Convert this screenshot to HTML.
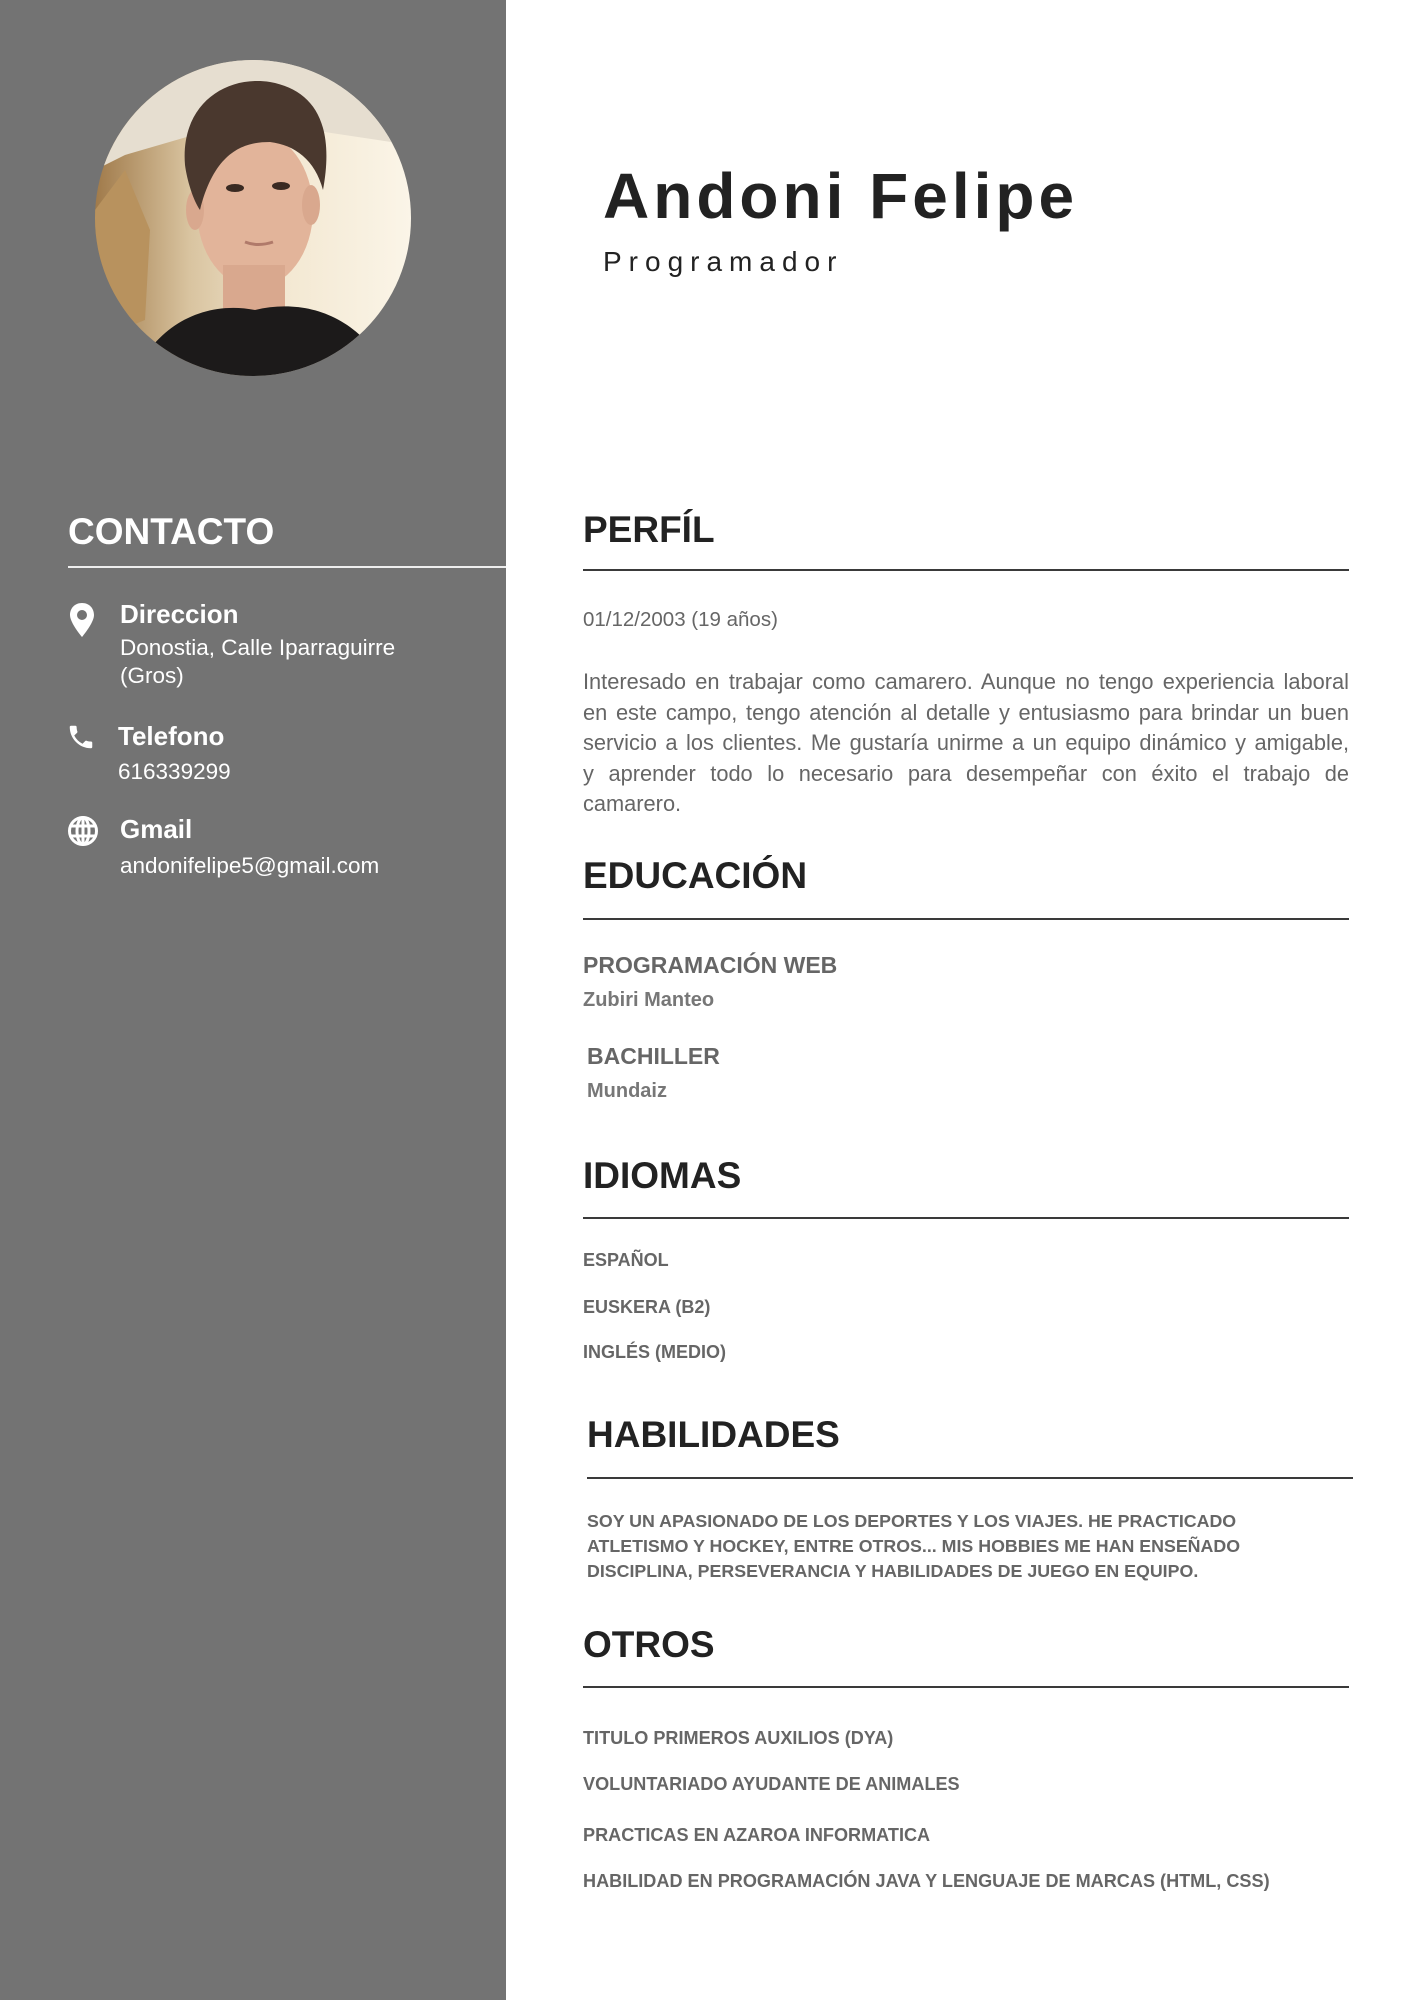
<!DOCTYPE html>
<html><head><meta charset="utf-8"><style>
*{margin:0;padding:0;box-sizing:border-box}
body{width:1414px;height:2000px;position:relative;background:#fff;font-family:"Liberation Sans",sans-serif;overflow:hidden}
.side{position:absolute;left:0;top:0;width:506px;height:2000px;background:#737373}
.a{position:absolute;white-space:nowrap}
.h{font-size:37px;font-weight:bold;color:#222;height:44px;line-height:44px}
.rule{position:absolute;height:2px;background:#3a3a3a}
.w{color:#fff}
.g{color:#666;font-weight:bold}
.p div{text-align:justify}
</style></head><body>
<div class="side"></div>
<svg class="a" style="left:95px;top:60px" width="316" height="316" viewBox="0 0 316 316">
<defs><clipPath id="c"><circle cx="158" cy="158" r="158"/></clipPath>
<linearGradient id="bg" x1="0" x2="1"><stop offset="0" stop-color="#a07a4a"/><stop offset=".3" stop-color="#d9c4a0"/><stop offset=".6" stop-color="#f3e8d2"/><stop offset="1" stop-color="#fbf5e8"/></linearGradient></defs>
<g clip-path="url(#c)">
<rect width="316" height="316" fill="url(#bg)"/>
<path d="M0 0 H316 V85 L150 60 L30 95 L0 110Z" fill="#e6ded0"/>
<path d="M0 150 L30 110 L55 170 L50 260 L0 280Z" fill="#b8925e"/>
<ellipse cx="160" cy="150" rx="58" ry="78" fill="#e2b49a"/>
<ellipse cx="100" cy="150" rx="9" ry="20" fill="#d9a88e"/><ellipse cx="216" cy="145" rx="9" ry="20" fill="#d9a88e"/>
<path d="M90 105 C85 45 130 15 175 22 C220 30 240 65 228 130 C220 100 200 85 175 82 C150 82 120 90 105 150 C98 140 92 120 90 105Z" fill="#4a382e"/>
<ellipse cx="140" cy="128" rx="9" ry="4" fill="#3a2a22"/><ellipse cx="186" cy="126" rx="9" ry="4" fill="#3a2a22"/>
<path d="M150 182 Q163 187 178 182" stroke="#b07a6a" stroke-width="3" fill="none"/>
<rect x="128" y="205" width="62" height="50" fill="#d9a88e"/>
<path d="M40 316 C60 265 110 240 160 250 C210 238 265 255 295 316Z" fill="#1c1a1a"/>
</g></svg>

<div class="a" style="left:603px;top:160px;font-size:64px;font-weight:bold;color:#222;letter-spacing:4px;line-height:72px">Andoni Felipe</div>
<div class="a" style="left:603px;top:246px;font-size:28px;color:#222;letter-spacing:7px;line-height:32px">Programador</div>

<div class="a h w" style="left:68px;top:510px">CONTACTO</div>
<div class="rule" style="left:68px;top:566px;width:438px;background:#eee"></div>

<svg class="a" style="left:68px;top:602px" width="28" height="36" viewBox="0 0 28 36"><path d="M14 1C6.5 1 2 6.5 2 13c0 8 12 22 12 22s12-14 12-22C26 6.5 21.5 1 14 1zm0 17a5 5 0 1 1 0-10 5 5 0 0 1 0 10z" fill="#fff" fill-rule="evenodd"/></svg>
<div class="a w" style="left:120px;top:598px;font-size:26px;font-weight:bold;line-height:32px">Direccion</div>
<div class="a w" style="left:120px;top:634px;font-size:22.5px;line-height:28px">Donostia, Calle Iparraguirre<br>(Gros)</div>

<svg class="a" style="left:66px;top:722px" width="30" height="30" viewBox="0 0 24 24"><path d="M6.6 10.8a15.1 15.1 0 0 0 6.6 6.6l2.2-2.2c.3-.3.7-.4 1-.2 1.1.4 2.3.6 3.6.6.6 0 1 .4 1 1V20c0 .6-.4 1-1 1C10.6 21 3 13.4 3 4c0-.6.4-1 1-1h3.5c.6 0 1 .4 1 1 0 1.3.2 2.5.6 3.6.1.3 0 .7-.2 1z" fill="#fff"/></svg>
<div class="a w" style="left:118px;top:720px;font-size:26px;font-weight:bold;line-height:32px">Telefono</div>
<div class="a w" style="left:118px;top:758px;font-size:22.5px;line-height:28px">616339299</div>

<svg class="a" style="left:67px;top:815px" width="32" height="32" viewBox="0 0 32 32"><g fill="none" stroke="#fff" stroke-width="3"><circle cx="16" cy="16" r="13.5"/><ellipse cx="16" cy="16" rx="6" ry="13.5"/><path d="M3 11h26M3 21h26M16 2.5v27"/></g></svg>
<div class="a w" style="left:120px;top:813px;font-size:26px;font-weight:bold;line-height:32px">Gmail</div>
<div class="a w" style="left:120px;top:852px;font-size:22.5px;line-height:28px">andonifelipe5@gmail.com</div>

<div class="a h" style="left:583px;top:508px">PERFÍL</div>
<div class="rule" style="left:583px;top:569px;width:766px"></div>
<div class="a" style="left:583px;top:606px;font-size:20.5px;color:#666;line-height:28px">01/12/2003 (19 años)</div>
<div class="a p" style="left:583px;top:667px;width:766px;white-space:normal;font-size:21.8px;color:#666;line-height:30.5px">
<div style="text-align-last:justify">Interesado en trabajar como camarero. Aunque no tengo experiencia laboral en este campo, tengo atención al detalle y entusiasmo para brindar un buen servicio a los clientes. Me gustaría unirme a un equipo dinámico y amigable,</div>
<div>y aprender todo lo necesario para desempeñar con éxito el trabajo de camarero.</div>
</div>

<div class="a h" style="left:583px;top:854px">EDUCACIÓN</div>
<div class="rule" style="left:583px;top:918px;width:766px"></div>
<div class="a g" style="left:583px;top:951px;font-size:23px;line-height:28px">PROGRAMACIÓN WEB</div>
<div class="a g" style="left:583px;top:987px;font-size:20px;line-height:26px;color:#777">Zubiri Manteo</div>
<div class="a g" style="left:587px;top:1042px;font-size:23px;line-height:28px">BACHILLER</div>
<div class="a g" style="left:587px;top:1078px;font-size:20px;line-height:26px;color:#777">Mundaiz</div>

<div class="a h" style="left:583px;top:1154px">IDIOMAS</div>
<div class="rule" style="left:583px;top:1217px;width:766px"></div>
<div class="a g" style="left:583px;top:1248px;font-size:18px;line-height:24px">ESPAÑOL</div>
<div class="a g" style="left:583px;top:1295px;font-size:18px;line-height:24px">EUSKERA (B2)</div>
<div class="a g" style="left:583px;top:1340px;font-size:18px;line-height:24px">INGLÉS (MEDIO)</div>

<div class="a h" style="left:587px;top:1413px">HABILIDADES</div>
<div class="rule" style="left:587px;top:1477px;width:766px"></div>
<div class="a g" style="left:587px;top:1509px;font-size:17.8px;line-height:25px">SOY UN APASIONADO DE LOS DEPORTES Y LOS VIAJES. HE PRACTICADO<br>ATLETISMO Y HOCKEY, ENTRE OTROS... MIS HOBBIES ME HAN ENSEÑADO<br>DISCIPLINA, PERSEVERANCIA Y HABILIDADES DE JUEGO EN EQUIPO.</div>

<div class="a h" style="left:583px;top:1623px">OTROS</div>
<div class="rule" style="left:583px;top:1686px;width:766px"></div>
<div class="a g" style="left:583px;top:1726px;font-size:18.1px;line-height:24px">TITULO PRIMEROS AUXILIOS (DYA)</div>
<div class="a g" style="left:583px;top:1772px;font-size:18.1px;line-height:24px">VOLUNTARIADO AYUDANTE DE ANIMALES</div>
<div class="a g" style="left:583px;top:1823px;font-size:18.1px;line-height:24px">PRACTICAS EN AZAROA INFORMATICA</div>
<div class="a g" style="left:583px;top:1869px;font-size:18.1px;line-height:24px">HABILIDAD EN PROGRAMACIÓN JAVA Y LENGUAJE DE MARCAS (HTML, CSS)</div>
</body></html>
